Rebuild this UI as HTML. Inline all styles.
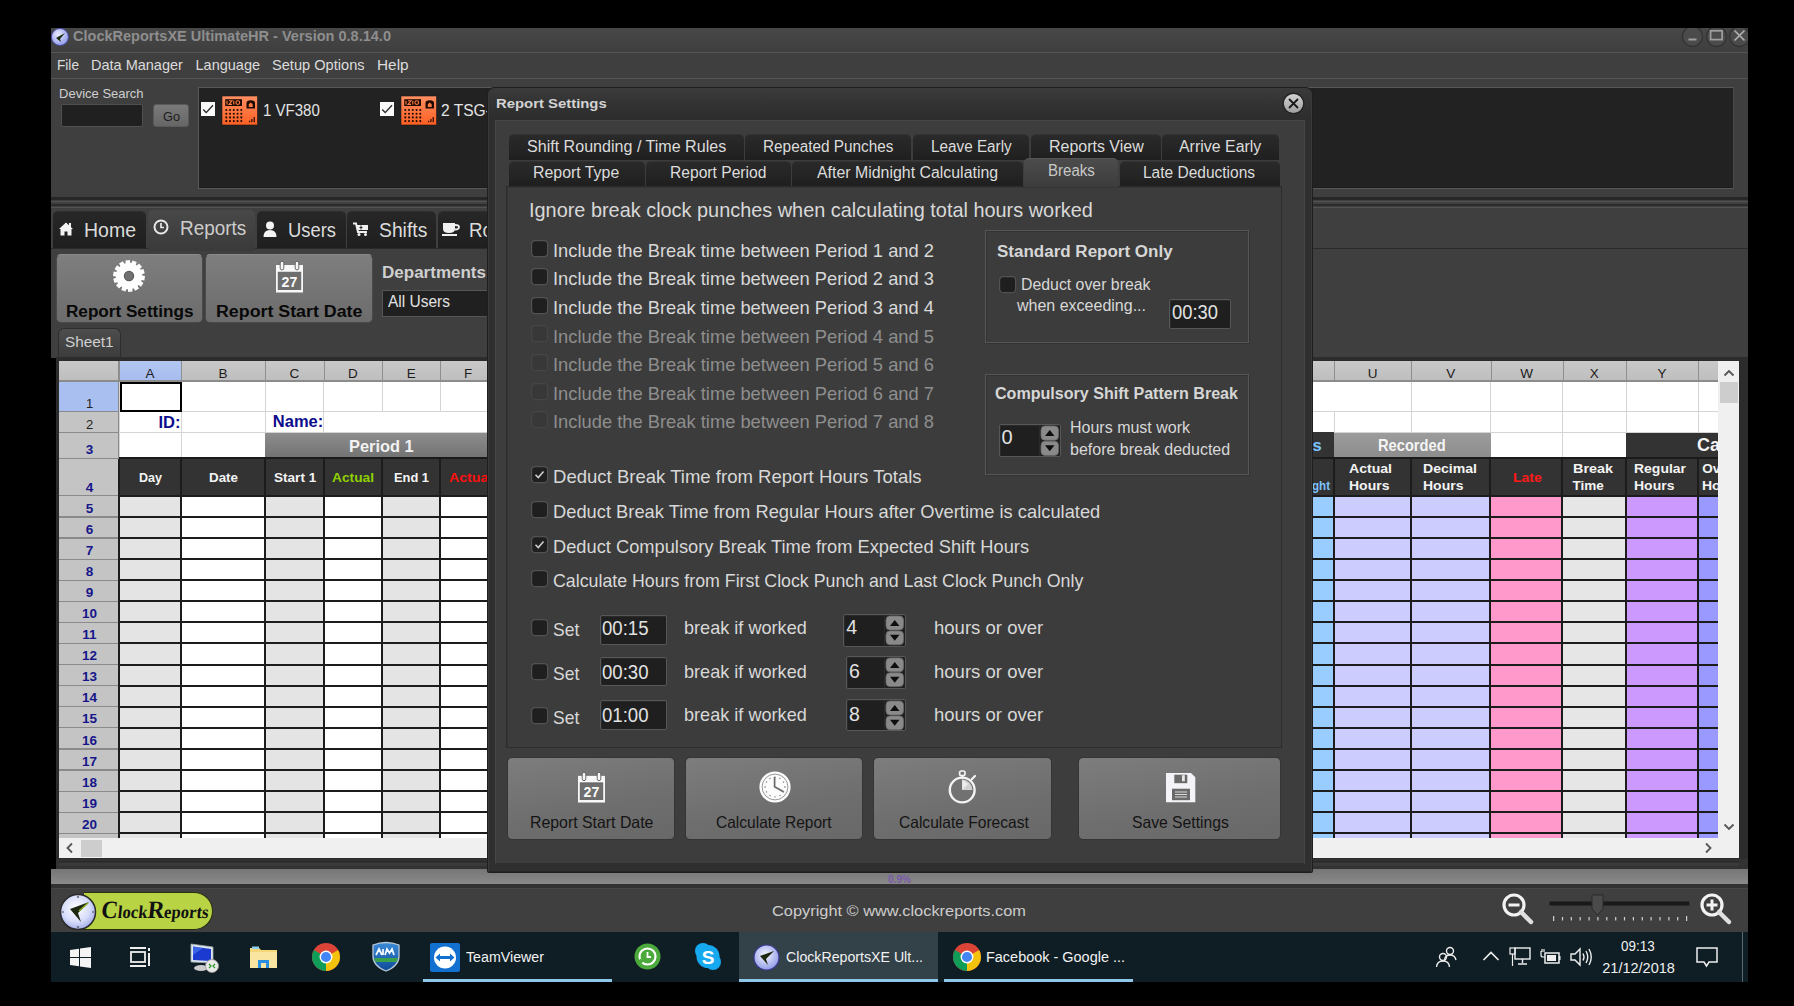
<!DOCTYPE html>
<html><head><meta charset="utf-8"><title>ClockReportsXE</title>
<style>
html,body{margin:0;padding:0;background:#000;width:1794px;height:1006px;overflow:hidden;}
body{position:relative;font-family:"Liberation Sans",sans-serif;}
.a{position:absolute;box-sizing:border-box;}
.t{white-space:nowrap;transform-origin:0 0;}
svg.a{overflow:visible;}
</style></head><body>
<div class="a" style="left:51.00px;top:28.00px;width:1697.00px;height:24.00px;background:linear-gradient(#474747,#3f3f3f);"></div>
<div class="a" style="left:51.00px;top:51.50px;width:1697.00px;height:2.00px;background:#565656;"></div>
<div class="a" style="left:51.00px;top:53.00px;width:1697.00px;height:25.00px;background:#3f3f3f;"></div>
<div class="a" style="left:51.00px;top:78.00px;width:1697.00px;height:1.00px;background:#555;"></div>
<div class="a" style="left:51.00px;top:79.00px;width:1697.00px;height:279.00px;background:#3f3f3f;"></div>
<div class="a" style="left:51.00px;top:197.00px;width:1697.00px;height:2.50px;background:#272727;"></div>
<div class="a" style="left:51.00px;top:200.50px;width:1697.00px;height:1.50px;background:#535353;"></div>
<div class="a" style="left:51.00px;top:204.00px;width:1697.00px;height:2.00px;background:#2c2c2c;"></div>
<div class="a" style="left:51.00px;top:206.50px;width:1697.00px;height:1.50px;background:#525252;"></div>
<div class="a" style="left:51.00px;top:247.50px;width:1697.00px;height:1.50px;background:#2a2a2a;"></div>
<svg class="a" style="left:51px;top:28px;" width="19" height="19" viewBox="0 0 19 19"><defs><radialGradient id="gi1" cx="40%" cy="35%" r="70%"><stop offset="0" stop-color="#e8ecff"/><stop offset="1" stop-color="#8c98e8"/></radialGradient></defs><circle cx="9" cy="9" r="8.5" fill="url(#gi1)" stroke="#4a4aa0" stroke-width="1"/><path d="M5 10 L14 5 L9 11 L10 14 Z" fill="#1a2a10"/></svg>
<div class="a t" style="left:73.00px;top:28.51px;font-size:14.4px;line-height:14.4px;color:#8e8e8e;font-weight:bold;transform:scaleX(1.0091);">ClockReportsXE UltimateHR -  Version 0.8.14.0</div>
<div class="a" style="left:1660px;top:28px;width:88px;height:30px;overflow:hidden">
<svg class="a" style="left:21.5px;top:-2px;" width="21" height="21" viewBox="0 0 21 21"><circle cx="10.5" cy="10.5" r="10" fill="#4b4b4b" stroke="#343434" stroke-width="1.3"/><rect x="6.5" y="12.5" width="8" height="2" fill="#a0a0a0"/></svg>
<svg class="a" style="left:45.5px;top:-2px;" width="21" height="21" viewBox="0 0 21 21"><circle cx="10.5" cy="10.5" r="10" fill="#4b4b4b" stroke="#343434" stroke-width="1.3"/><rect x="4.6" y="4.8" width="11.5" height="8.8" fill="none" stroke="#a0a0a0" stroke-width="1.7"/></svg>
<svg class="a" style="left:68.5px;top:-2px;" width="21" height="21" viewBox="0 0 21 21"><circle cx="10.5" cy="10.5" r="10" fill="#4b4b4b" stroke="#343434" stroke-width="1.3"/><path d="M5.5 4.5 L15.5 14.5 M15.5 4.5 L5.5 14.5" stroke="#b0b0b0" stroke-width="1.7"/></svg>
</div>
<div class="a" style="left:1748.00px;top:20.00px;width:46.00px;height:40.00px;background:#000;"></div>
<div class="a t" style="left:56.50px;top:57.73px;font-size:14.5px;line-height:14.5px;color:#dcdcdc;transform:scaleX(0.9416);">File</div>
<div class="a t" style="left:91.00px;top:57.73px;font-size:14.5px;line-height:14.5px;color:#dcdcdc;">Data Manager</div>
<div class="a t" style="left:195.50px;top:57.73px;font-size:14.5px;line-height:14.5px;color:#dcdcdc;">Language</div>
<div class="a t" style="left:272.40px;top:57.73px;font-size:14.5px;line-height:14.5px;color:#dcdcdc;transform:scaleX(1.0077);">Setup Options</div>
<div class="a t" style="left:377.40px;top:57.73px;font-size:14.5px;line-height:14.5px;color:#dcdcdc;transform:scaleX(1.0596);">Help</div>
<div class="a t" style="left:58.60px;top:87.56px;font-size:12.8px;line-height:12.8px;color:#cfcfcf;transform:scaleX(1.0166);">Device Search</div>
<div class="a" style="left:61.00px;top:104.00px;width:82.00px;height:23.00px;background:#202020;border:1px solid #505050;border-radius:2px;"></div>
<div class="a" style="left:153.00px;top:104.00px;width:36.00px;height:23.00px;background:linear-gradient(#7a7a7a,#666);border:1px solid #5a5a5a;border-radius:3px;"></div>
<div class="a t" style="left:162.50px;top:110.00px;font-size:13px;line-height:13px;color:#1c1c1c;transform:scaleX(0.9803);">Go</div>
<div class="a" style="left:198.00px;top:86.50px;width:1536.00px;height:102.00px;background:#222;border:1.5px solid #585858;border-right-color:#4a4a4a;box-shadow:inset 0 -1px 0 #1c1c1c;"></div>
<svg class="a" style="left:201px;top:102.2px;" width="14" height="14" viewBox="0 0 14 14"><rect x="0" y="0" width="14" height="14" fill="#fafafa"/><path d="M2.2 7.6 L5.2 10.6 L12 3.2" fill="none" stroke="#2a2a2a" stroke-width="1.4"/></svg>
<svg class="a" style="left:222px;top:96px;" width="36" height="29" viewBox="0 0 36 29"><defs><linearGradient id="dvg" x1="0" y1="0" x2="0" y2="1"><stop offset="0" stop-color="#ff8f62"/><stop offset="1" stop-color="#ff5f22"/></linearGradient></defs><rect x="0" y="0" width="35.5" height="29" fill="url(#dvg)" stroke="#1a1a1a" stroke-width="0.6"/><rect x="3.2" y="3.2" width="16.8" height="6.8" fill="#1e0c04"/><path d="M5 4.8 V8.4 M7 4.8 H10 L7 8.4 H10 M11.8 4.8 V8.4" stroke="#ff7a40" stroke-width="1.1" fill="none"/><circle cx="15.8" cy="6.6" r="1.9" fill="none" stroke="#ff7a40" stroke-width="1.1"/><circle cx="4.30" cy="14.00" r="1.05" fill="#1e0c04"/><circle cx="8.05" cy="14.00" r="1.05" fill="#1e0c04"/><circle cx="11.80" cy="14.00" r="1.05" fill="#1e0c04"/><circle cx="15.55" cy="14.00" r="1.05" fill="#1e0c04"/><circle cx="19.30" cy="14.00" r="1.05" fill="#1e0c04"/><circle cx="4.30" cy="17.70" r="1.05" fill="#1e0c04"/><circle cx="8.05" cy="17.70" r="1.05" fill="#1e0c04"/><circle cx="11.80" cy="17.70" r="1.05" fill="#1e0c04"/><circle cx="15.55" cy="17.70" r="1.05" fill="#1e0c04"/><circle cx="19.30" cy="17.70" r="1.05" fill="#1e0c04"/><circle cx="4.30" cy="21.40" r="1.05" fill="#1e0c04"/><circle cx="8.05" cy="21.40" r="1.05" fill="#1e0c04"/><circle cx="11.80" cy="21.40" r="1.05" fill="#1e0c04"/><circle cx="15.55" cy="21.40" r="1.05" fill="#1e0c04"/><circle cx="19.30" cy="21.40" r="1.05" fill="#1e0c04"/><circle cx="4.30" cy="25.10" r="1.05" fill="#1e0c04"/><circle cx="8.05" cy="25.10" r="1.05" fill="#1e0c04"/><circle cx="11.80" cy="25.10" r="1.05" fill="#1e0c04"/><circle cx="15.55" cy="25.10" r="1.05" fill="#1e0c04"/><circle cx="19.30" cy="25.10" r="1.05" fill="#1e0c04"/><path d="M24.5 12.5 V7 Q24.5 4.3 28.7 4.3 Q33 4.3 33 7 V12.5 Z" fill="#1e0c04"/><path d="M26.8 11 V8.3 L28.7 6.6 L30.7 8.3 V11 Z" fill="#ff7a40"/><rect x="27" y="24.8" width="1.2" height="1.4" fill="#1e0c04"/><rect x="29.3" y="23" width="1.2" height="3.2" fill="#1e0c04"/><rect x="31.6" y="21" width="1.2" height="5.2" fill="#1e0c04"/></svg>
<div class="a t" style="left:263.00px;top:102.76px;font-size:16px;line-height:16px;color:#e4e4e4;transform:scaleX(0.9391);">1 VF380</div>
<svg class="a" style="left:380px;top:102.2px;" width="14" height="14" viewBox="0 0 14 14"><rect x="0" y="0" width="14" height="14" fill="#fafafa"/><path d="M2.2 7.6 L5.2 10.6 L12 3.2" fill="none" stroke="#2a2a2a" stroke-width="1.4"/></svg>
<svg class="a" style="left:401px;top:96px;" width="36" height="29" viewBox="0 0 36 29"><defs><linearGradient id="dvg" x1="0" y1="0" x2="0" y2="1"><stop offset="0" stop-color="#ff8f62"/><stop offset="1" stop-color="#ff5f22"/></linearGradient></defs><rect x="0" y="0" width="35.5" height="29" fill="url(#dvg)" stroke="#1a1a1a" stroke-width="0.6"/><rect x="3.2" y="3.2" width="16.8" height="6.8" fill="#1e0c04"/><path d="M5 4.8 V8.4 M7 4.8 H10 L7 8.4 H10 M11.8 4.8 V8.4" stroke="#ff7a40" stroke-width="1.1" fill="none"/><circle cx="15.8" cy="6.6" r="1.9" fill="none" stroke="#ff7a40" stroke-width="1.1"/><circle cx="4.30" cy="14.00" r="1.05" fill="#1e0c04"/><circle cx="8.05" cy="14.00" r="1.05" fill="#1e0c04"/><circle cx="11.80" cy="14.00" r="1.05" fill="#1e0c04"/><circle cx="15.55" cy="14.00" r="1.05" fill="#1e0c04"/><circle cx="19.30" cy="14.00" r="1.05" fill="#1e0c04"/><circle cx="4.30" cy="17.70" r="1.05" fill="#1e0c04"/><circle cx="8.05" cy="17.70" r="1.05" fill="#1e0c04"/><circle cx="11.80" cy="17.70" r="1.05" fill="#1e0c04"/><circle cx="15.55" cy="17.70" r="1.05" fill="#1e0c04"/><circle cx="19.30" cy="17.70" r="1.05" fill="#1e0c04"/><circle cx="4.30" cy="21.40" r="1.05" fill="#1e0c04"/><circle cx="8.05" cy="21.40" r="1.05" fill="#1e0c04"/><circle cx="11.80" cy="21.40" r="1.05" fill="#1e0c04"/><circle cx="15.55" cy="21.40" r="1.05" fill="#1e0c04"/><circle cx="19.30" cy="21.40" r="1.05" fill="#1e0c04"/><circle cx="4.30" cy="25.10" r="1.05" fill="#1e0c04"/><circle cx="8.05" cy="25.10" r="1.05" fill="#1e0c04"/><circle cx="11.80" cy="25.10" r="1.05" fill="#1e0c04"/><circle cx="15.55" cy="25.10" r="1.05" fill="#1e0c04"/><circle cx="19.30" cy="25.10" r="1.05" fill="#1e0c04"/><path d="M24.5 12.5 V7 Q24.5 4.3 28.7 4.3 Q33 4.3 33 7 V12.5 Z" fill="#1e0c04"/><path d="M26.8 11 V8.3 L28.7 6.6 L30.7 8.3 V11 Z" fill="#ff7a40"/><rect x="27" y="24.8" width="1.2" height="1.4" fill="#1e0c04"/><rect x="29.3" y="23" width="1.2" height="3.2" fill="#1e0c04"/><rect x="31.6" y="21" width="1.2" height="5.2" fill="#1e0c04"/></svg>
<div class="a t" style="left:441.00px;top:102.76px;font-size:16px;line-height:16px;color:#e4e4e4;transform:scaleX(0.9711);">2 TSG-400</div>
<div class="a" style="left:52.60px;top:211.00px;width:93.40px;height:37.00px;background:linear-gradient(#272727,#1f1f1f);border-radius:5px 5px 0 0;border-top:1px solid #2e2e2e;"></div>
<div class="a" style="left:148.00px;top:209.50px;width:107.00px;height:41.00px;background:linear-gradient(#484848,#3a3a3a);border-radius:5px 5px 0 0;"></div>
<div class="a" style="left:257.00px;top:211.00px;width:89.00px;height:37.00px;background:linear-gradient(#272727,#1f1f1f);border-radius:5px 5px 0 0;border-top:1px solid #2e2e2e;"></div>
<div class="a" style="left:347.00px;top:211.00px;width:89.00px;height:37.00px;background:linear-gradient(#272727,#1f1f1f);border-radius:5px 5px 0 0;border-top:1px solid #2e2e2e;"></div>
<div class="a" style="left:438.00px;top:211.00px;width:62.00px;height:37.00px;background:linear-gradient(#272727,#1f1f1f);border-radius:5px 5px 0 0;border-top:1px solid #2e2e2e;"></div>
<div class="a t" style="left:84.30px;top:219.87px;font-size:20px;line-height:20px;color:#dcdcdc;transform:scaleX(0.9747);">Home</div>
<div class="a t" style="left:179.50px;top:218.07px;font-size:20px;line-height:20px;color:#cdcdcd;transform:scaleX(0.9453);">Reports</div>
<div class="a t" style="left:288.40px;top:219.87px;font-size:20px;line-height:20px;color:#dcdcdc;transform:scaleX(0.9191);">Users</div>
<div class="a t" style="left:378.70px;top:219.87px;font-size:20px;line-height:20px;color:#dcdcdc;transform:scaleX(0.9656);">Shifts</div>
<div class="a t" style="left:469.40px;top:219.87px;font-size:20px;line-height:20px;color:#dcdcdc;transform:scaleX(0.9387);">Ro</div>
<svg class="a" style="left:58px;top:221px;" width="16" height="15" viewBox="0 0 16 15"><path d="M1 8 L8 1.5 L15 8 L13.5 8 L13.5 14.5 L9.5 14.5 L9.5 10.5 L6.5 10.5 L6.5 14.5 L2.5 14.5 L2.5 8 Z" fill="#f4f4f4"/><rect x="11" y="2" width="2" height="4" fill="#f4f4f4"/></svg>
<svg class="a" style="left:153px;top:219px;" width="16" height="16" viewBox="0 0 16 16"><circle cx="8" cy="8" r="6.5" fill="none" stroke="#e8e8e8" stroke-width="2"/><path d="M8 4 V8.5 H11" fill="none" stroke="#e8e8e8" stroke-width="1.7"/></svg>
<svg class="a" style="left:263px;top:221px;" width="14" height="16" viewBox="0 0 14 16"><circle cx="7" cy="4.5" r="4" fill="#f4f4f4"/><path d="M0.5 16 Q0.5 9 7 9 Q13.5 9 13.5 16 Z" fill="#f4f4f4"/></svg>
<svg class="a" style="left:353px;top:222px;" width="16" height="14" viewBox="0 0 16 14"><path d="M0 1.5 H3 L5 10 H14" fill="none" stroke="#f0f0f0" stroke-width="2"/><rect x="4" y="3" width="11" height="5" fill="#f0f0f0"/><path d="M8 3.5 v4 M6.5 5.5 h3" stroke="#222" stroke-width="1"/><circle cx="6" cy="12.5" r="1.5" fill="#f0f0f0"/><circle cx="12.5" cy="12.5" r="1.5" fill="#f0f0f0"/></svg>
<svg class="a" style="left:442px;top:221px;" width="18" height="15" viewBox="0 0 18 15"><path d="M1 2 H13 V8 Q13 12 7 12 Q1 12 1 8 Z" fill="#f0f0f0"/><path d="M13 4 Q17 4 17 6 Q17 8.5 13 8.5" fill="none" stroke="#f0f0f0" stroke-width="1.8"/><rect x="0" y="13" width="15" height="2" fill="#f0f0f0"/></svg>
<div class="a" style="left:56.00px;top:254.00px;width:146.50px;height:68.50px;background:linear-gradient(#7e7e7e,#6c6c6c);border-radius:5px;border:1px solid #4a4a4a;border-top-color:#8a8a8a;"></div>
<div class="a" style="left:205.00px;top:254.00px;width:167.50px;height:68.50px;background:linear-gradient(#7e7e7e,#6c6c6c);border-radius:5px;border:1px solid #4a4a4a;border-top-color:#8a8a8a;"></div>
<div class="a t" style="left:66.00px;top:304.46px;font-size:16px;line-height:16px;color:#080808;font-weight:bold;transform:scaleX(1.0704);">Report Settings</div>
<div class="a t" style="left:216.30px;top:304.46px;font-size:16px;line-height:16px;color:#080808;font-weight:bold;transform:scaleX(1.1126);">Report Start Date</div>
<svg class="a" style="left:112.9px;top:259.8px;" width="32" height="32" viewBox="0 0 32 32"><polygon points="32.00,16.00 31.38,20.39 28.55,20.08 28.09,21.30 30.42,22.94 27.95,26.63 25.54,25.12 24.60,26.02 25.98,28.51 22.16,30.77 20.64,28.36 19.40,28.76 19.56,31.60 15.14,31.98 14.82,29.15 13.53,28.97 12.44,31.60 8.29,30.02 9.23,27.33 8.15,26.61 6.02,28.51 2.97,25.29 4.98,23.27 4.32,22.15 1.58,22.94 0.23,18.72 2.92,17.77 2.81,16.47 0.00,16.00 0.62,11.61 3.45,11.92 3.91,10.70 1.58,9.06 4.05,5.37 6.46,6.88 7.40,5.98 6.02,3.49 9.84,1.23 11.36,3.64 12.60,3.24 12.44,0.40 16.86,0.02 17.18,2.85 18.47,3.03 19.56,0.40 23.71,1.98 22.77,4.67 23.85,5.39 25.98,3.49 29.03,6.71 27.02,8.73 27.68,9.85 30.42,9.06 31.77,13.28 29.08,14.23 29.19,15.53" fill="#fdfdfd"/><circle cx="16" cy="16" r="4.6" fill="#707070" stroke="#5a5a5a" stroke-width="1.2"/></svg>
<svg class="a" style="left:275px;top:261px;" width="29" height="32" viewBox="0 0 29 32"><g transform="scale(1.000,1.000)"><rect x="1" y="4" width="27" height="27.5" fill="#f8f8f8"/><rect x="3.2" y="11.2" width="22.6" height="17.3" fill="#6e6e6e" stroke="#5e5e5e" stroke-width="0.8"/><rect x="5.2" y="0.3" width="3.6" height="8.6" rx="1.8" fill="#f8f8f8" stroke="#5a5a5a" stroke-width="0.9"/><rect x="20.2" y="0.3" width="3.6" height="8.6" rx="1.8" fill="#f8f8f8" stroke="#5a5a5a" stroke-width="0.9"/><text x="14.5" y="26.2" font-size="14.2" font-family="Liberation Sans" font-weight="bold" text-anchor="middle" fill="#fafafa">27</text></g></svg>
<div class="a t" style="left:382.40px;top:264.03px;font-size:16.5px;line-height:16.5px;color:#cfcfcf;font-weight:bold;transform:scaleX(1.0311);">Departments</div>
<div class="a" style="left:382.40px;top:290.00px;width:200.00px;height:27.00px;background:#202020;border:1px solid #555;"></div>
<div class="a t" style="left:388.00px;top:294.46px;font-size:16px;line-height:16px;color:#e2e2e2;transform:scaleX(0.9686);">All Users</div>
<div class="a" style="left:58.30px;top:328.40px;width:62.50px;height:30.00px;background:linear-gradient(#4d4d4d,#3c3c3c);border:1px solid #2e2e2e;border-bottom:none;border-radius:6px 6px 0 0;"></div>
<div class="a t" style="left:64.70px;top:333.88px;font-size:15.5px;line-height:15.5px;color:#cfcfcf;transform:scaleX(0.9893);">Sheet1</div>
<div class="a" style="left:56.00px;top:356.50px;width:1692.00px;height:508.00px;background:#2c2c2c;"></div>
<div class="a" style="left:59.00px;top:361.00px;width:1680.00px;height:477.00px;background:#fff;"></div>
<div class="a" style="left:0;top:0;width:1718px;height:838px;overflow:hidden">
<div class="a" style="left:119.00px;top:361.00px;width:1640.00px;height:20.50px;background:linear-gradient(#c9c9c9,#bdbdbd);"></div>
<div class="a" style="left:59.00px;top:361.00px;width:60.00px;height:20.50px;background:linear-gradient(#c9c9c9,#bdbdbd);"></div>
<div class="a" style="left:119.00px;top:361.00px;width:62.00px;height:20.50px;background:linear-gradient(#b3c6f2,#a6bcef);"></div>
<div class="a" style="left:119.00px;top:361.00px;width:1.00px;height:20.50px;background:#8f8f8f;"></div>
<div class="a t" style="left:145.50px;top:366.57px;font-size:13.5px;line-height:13.5px;color:#1c1c1c;">A</div>
<div class="a" style="left:181.00px;top:361.00px;width:1.00px;height:20.50px;background:#8f8f8f;"></div>
<div class="a t" style="left:218.50px;top:366.57px;font-size:13.5px;line-height:13.5px;color:#1c1c1c;">B</div>
<div class="a" style="left:265.00px;top:361.00px;width:1.00px;height:20.50px;background:#8f8f8f;"></div>
<div class="a t" style="left:289.43px;top:366.57px;font-size:13.5px;line-height:13.5px;color:#1c1c1c;">C</div>
<div class="a" style="left:323.60px;top:361.00px;width:1.00px;height:20.50px;background:#8f8f8f;"></div>
<div class="a t" style="left:347.93px;top:366.57px;font-size:13.5px;line-height:13.5px;color:#1c1c1c;">D</div>
<div class="a" style="left:382.00px;top:361.00px;width:1.00px;height:20.50px;background:#8f8f8f;"></div>
<div class="a t" style="left:406.70px;top:366.57px;font-size:13.5px;line-height:13.5px;color:#1c1c1c;">E</div>
<div class="a" style="left:440.40px;top:361.00px;width:1.00px;height:20.50px;background:#8f8f8f;"></div>
<div class="a t" style="left:463.88px;top:366.57px;font-size:13.5px;line-height:13.5px;color:#1c1c1c;">F</div>
<div class="a" style="left:510.00px;top:361.00px;width:1.00px;height:20.50px;background:#8f8f8f;"></div>
<div class="a" style="left:1260.00px;top:361.00px;width:1.00px;height:20.50px;background:#8f8f8f;"></div>
<div class="a" style="left:1334.00px;top:361.00px;width:1.00px;height:20.50px;background:#8f8f8f;"></div>
<div class="a t" style="left:1367.63px;top:366.57px;font-size:13.5px;line-height:13.5px;color:#1c1c1c;">U</div>
<div class="a" style="left:1411.00px;top:361.00px;width:1.00px;height:20.50px;background:#8f8f8f;"></div>
<div class="a t" style="left:1446.25px;top:366.57px;font-size:13.5px;line-height:13.5px;color:#1c1c1c;">V</div>
<div class="a" style="left:1490.50px;top:361.00px;width:1.00px;height:20.50px;background:#8f8f8f;"></div>
<div class="a t" style="left:1520.13px;top:366.57px;font-size:13.5px;line-height:13.5px;color:#1c1c1c;">W</div>
<div class="a" style="left:1562.50px;top:361.00px;width:1.00px;height:20.50px;background:#8f8f8f;"></div>
<div class="a t" style="left:1589.75px;top:366.57px;font-size:13.5px;line-height:13.5px;color:#1c1c1c;">X</div>
<div class="a" style="left:1626.00px;top:361.00px;width:1.00px;height:20.50px;background:#8f8f8f;"></div>
<div class="a t" style="left:1657.50px;top:366.57px;font-size:13.5px;line-height:13.5px;color:#1c1c1c;">Y</div>
<div class="a" style="left:1698.00px;top:361.00px;width:1.00px;height:20.50px;background:#8f8f8f;"></div>
<div class="a" style="left:59.00px;top:380.00px;width:1680.00px;height:1.50px;background:#8c8c8c;"></div>
<div class="a" style="left:59.00px;top:381.50px;width:60.00px;height:460.00px;background:#c4c4c4;"></div>
<div class="a" style="left:59.00px;top:381.50px;width:60.00px;height:29.50px;background:#a9bff0;"></div>
<div class="a" style="left:59.00px;top:381.00px;width:60.00px;height:1.20px;background:#8a8a8a;"></div>
<div class="a" style="left:59.00px;top:410.50px;width:60.00px;height:1.20px;background:#8a8a8a;"></div>
<div class="a" style="left:59.00px;top:431.80px;width:60.00px;height:1.20px;background:#8a8a8a;"></div>
<div class="a" style="left:59.00px;top:458.00px;width:60.00px;height:1.20px;background:#8a8a8a;"></div>
<div class="a" style="left:59.00px;top:495.30px;width:60.00px;height:1.20px;background:#8a8a8a;"></div>
<div class="a" style="left:59.00px;top:516.39px;width:60.00px;height:1.20px;background:#8a8a8a;"></div>
<div class="a" style="left:59.00px;top:537.48px;width:60.00px;height:1.20px;background:#8a8a8a;"></div>
<div class="a" style="left:59.00px;top:558.57px;width:60.00px;height:1.20px;background:#8a8a8a;"></div>
<div class="a" style="left:59.00px;top:579.66px;width:60.00px;height:1.20px;background:#8a8a8a;"></div>
<div class="a" style="left:59.00px;top:600.75px;width:60.00px;height:1.20px;background:#8a8a8a;"></div>
<div class="a" style="left:59.00px;top:621.84px;width:60.00px;height:1.20px;background:#8a8a8a;"></div>
<div class="a" style="left:59.00px;top:642.93px;width:60.00px;height:1.20px;background:#8a8a8a;"></div>
<div class="a" style="left:59.00px;top:664.02px;width:60.00px;height:1.20px;background:#8a8a8a;"></div>
<div class="a" style="left:59.00px;top:685.11px;width:60.00px;height:1.20px;background:#8a8a8a;"></div>
<div class="a" style="left:59.00px;top:706.20px;width:60.00px;height:1.20px;background:#8a8a8a;"></div>
<div class="a" style="left:59.00px;top:727.29px;width:60.00px;height:1.20px;background:#8a8a8a;"></div>
<div class="a" style="left:59.00px;top:748.38px;width:60.00px;height:1.20px;background:#8a8a8a;"></div>
<div class="a" style="left:59.00px;top:769.47px;width:60.00px;height:1.20px;background:#8a8a8a;"></div>
<div class="a" style="left:59.00px;top:790.56px;width:60.00px;height:1.20px;background:#8a8a8a;"></div>
<div class="a" style="left:59.00px;top:811.65px;width:60.00px;height:1.20px;background:#8a8a8a;"></div>
<div class="a" style="left:59.00px;top:832.74px;width:60.00px;height:1.20px;background:#8a8a8a;"></div>
<div class="a" style="left:118.00px;top:361.00px;width:1.00px;height:480.00px;background:#8a8a8a;"></div>
<div class="a" style="left:119.00px;top:381.50px;width:1640.00px;height:77.00px;background:#fff;"></div>
<div class="a" style="left:119.00px;top:410.50px;width:1640.00px;height:1.20px;background:#d4d4d4;"></div>
<div class="a" style="left:119.00px;top:431.80px;width:1640.00px;height:1.20px;background:#d4d4d4;"></div>
<div class="a" style="left:119.00px;top:458.00px;width:1640.00px;height:1.20px;background:#d4d4d4;"></div>
<div class="a" style="left:118.50px;top:381.50px;width:1.20px;height:77.00px;background:#d4d4d4;"></div>
<div class="a" style="left:180.50px;top:381.50px;width:1.20px;height:77.00px;background:#d4d4d4;"></div>
<div class="a" style="left:264.50px;top:381.50px;width:1.20px;height:77.00px;background:#d4d4d4;"></div>
<div class="a" style="left:323.10px;top:381.50px;width:1.20px;height:77.00px;background:#d4d4d4;"></div>
<div class="a" style="left:381.50px;top:381.50px;width:1.20px;height:29.50px;background:#d4d4d4;"></div>
<div class="a" style="left:439.90px;top:381.50px;width:1.20px;height:29.50px;background:#d4d4d4;"></div>
<div class="a" style="left:509.50px;top:381.50px;width:1.20px;height:29.50px;background:#d4d4d4;"></div>
<div class="a" style="left:1259.50px;top:381.50px;width:1.20px;height:77.00px;background:#d4d4d4;"></div>
<div class="a" style="left:1333.50px;top:411.00px;width:1.20px;height:47.50px;background:#d4d4d4;"></div>
<div class="a" style="left:1410.50px;top:381.50px;width:1.20px;height:77.00px;background:#d4d4d4;"></div>
<div class="a" style="left:1490.00px;top:381.50px;width:1.20px;height:77.00px;background:#d4d4d4;"></div>
<div class="a" style="left:1562.00px;top:381.50px;width:1.20px;height:77.00px;background:#d4d4d4;"></div>
<div class="a" style="left:1625.50px;top:381.50px;width:1.20px;height:77.00px;background:#d4d4d4;"></div>
<div class="a" style="left:1697.50px;top:381.50px;width:1.20px;height:77.00px;background:#d4d4d4;"></div>
<div class="a" style="left:265.00px;top:432.80px;width:300.00px;height:25.70px;background:linear-gradient(#8d8d8d,#727272);"></div>
<div class="a" style="left:1312.00px;top:432.30px;width:22.00px;height:26.20px;background:#333;"></div>
<div class="a" style="left:1334.00px;top:432.80px;width:156.50px;height:25.70px;background:linear-gradient(#9c9c9c,#8c8c8c);"></div>
<div class="a" style="left:1626.00px;top:432.80px;width:120.00px;height:25.70px;background:#333;"></div>
<div class="a" style="left:119.00px;top:458.50px;width:1640.00px;height:37.30px;background:#333;"></div>
<div class="a" style="left:119.00px;top:495.80px;width:62.00px;height:345.00px;background:#e4e4e4;"></div>
<div class="a" style="left:181.00px;top:495.80px;width:84.00px;height:345.00px;background:#fff;"></div>
<div class="a" style="left:265.00px;top:495.80px;width:58.60px;height:345.00px;background:#e4e4e4;"></div>
<div class="a" style="left:323.60px;top:495.80px;width:58.40px;height:345.00px;background:#fff;"></div>
<div class="a" style="left:382.00px;top:495.80px;width:58.40px;height:345.00px;background:#e4e4e4;"></div>
<div class="a" style="left:440.40px;top:495.80px;width:69.60px;height:345.00px;background:#fff;"></div>
<div class="a" style="left:510.00px;top:495.80px;width:60.00px;height:345.00px;background:#e4e4e4;"></div>
<div class="a" style="left:1260.00px;top:495.80px;width:74.00px;height:345.00px;background:#99ccff;"></div>
<div class="a" style="left:1334.00px;top:495.80px;width:77.00px;height:345.00px;background:#ccccff;"></div>
<div class="a" style="left:1411.00px;top:495.80px;width:79.50px;height:345.00px;background:#ccccff;"></div>
<div class="a" style="left:1490.50px;top:495.80px;width:72.00px;height:345.00px;background:#ff99cc;"></div>
<div class="a" style="left:1562.50px;top:495.80px;width:63.50px;height:345.00px;background:#e6e6e6;"></div>
<div class="a" style="left:1626.00px;top:495.80px;width:72.00px;height:345.00px;background:#cc99ff;"></div>
<div class="a" style="left:1698.00px;top:495.80px;width:72.00px;height:345.00px;background:#9999ff;"></div>
<div class="a" style="left:118.00px;top:458.50px;width:1.60px;height:380.00px;background:#1c1c1c;"></div>
<div class="a" style="left:180.00px;top:458.50px;width:1.60px;height:380.00px;background:#1c1c1c;"></div>
<div class="a" style="left:264.00px;top:458.50px;width:1.60px;height:380.00px;background:#1c1c1c;"></div>
<div class="a" style="left:323.00px;top:458.50px;width:1.60px;height:380.00px;background:#1c1c1c;"></div>
<div class="a" style="left:381.00px;top:458.50px;width:1.60px;height:380.00px;background:#1c1c1c;"></div>
<div class="a" style="left:439.00px;top:458.50px;width:1.60px;height:380.00px;background:#1c1c1c;"></div>
<div class="a" style="left:509.00px;top:458.50px;width:1.60px;height:380.00px;background:#1c1c1c;"></div>
<div class="a" style="left:1259.00px;top:458.50px;width:1.60px;height:380.00px;background:#1c1c1c;"></div>
<div class="a" style="left:1333.00px;top:458.50px;width:1.60px;height:380.00px;background:#1c1c1c;"></div>
<div class="a" style="left:1410.00px;top:458.50px;width:1.60px;height:380.00px;background:#1c1c1c;"></div>
<div class="a" style="left:1489.00px;top:458.50px;width:1.60px;height:380.00px;background:#1c1c1c;"></div>
<div class="a" style="left:1561.00px;top:458.50px;width:1.60px;height:380.00px;background:#1c1c1c;"></div>
<div class="a" style="left:1625.00px;top:458.50px;width:1.60px;height:380.00px;background:#1c1c1c;"></div>
<div class="a" style="left:1697.00px;top:458.50px;width:1.60px;height:380.00px;background:#1c1c1c;"></div>
<div class="a" style="left:119.00px;top:457.00px;width:1640.00px;height:1.60px;background:#1c1c1c;"></div>
<div class="a" style="left:119.00px;top:495.00px;width:1640.00px;height:1.60px;background:#1c1c1c;"></div>
<div class="a" style="left:119.00px;top:516.00px;width:1640.00px;height:1.60px;background:#1c1c1c;"></div>
<div class="a" style="left:119.00px;top:537.00px;width:1640.00px;height:1.60px;background:#1c1c1c;"></div>
<div class="a" style="left:119.00px;top:558.00px;width:1640.00px;height:1.60px;background:#1c1c1c;"></div>
<div class="a" style="left:119.00px;top:579.00px;width:1640.00px;height:1.60px;background:#1c1c1c;"></div>
<div class="a" style="left:119.00px;top:600.00px;width:1640.00px;height:1.60px;background:#1c1c1c;"></div>
<div class="a" style="left:119.00px;top:621.00px;width:1640.00px;height:1.60px;background:#1c1c1c;"></div>
<div class="a" style="left:119.00px;top:642.00px;width:1640.00px;height:1.60px;background:#1c1c1c;"></div>
<div class="a" style="left:119.00px;top:664.00px;width:1640.00px;height:1.60px;background:#1c1c1c;"></div>
<div class="a" style="left:119.00px;top:685.00px;width:1640.00px;height:1.60px;background:#1c1c1c;"></div>
<div class="a" style="left:119.00px;top:706.00px;width:1640.00px;height:1.60px;background:#1c1c1c;"></div>
<div class="a" style="left:119.00px;top:727.00px;width:1640.00px;height:1.60px;background:#1c1c1c;"></div>
<div class="a" style="left:119.00px;top:748.00px;width:1640.00px;height:1.60px;background:#1c1c1c;"></div>
<div class="a" style="left:119.00px;top:769.00px;width:1640.00px;height:1.60px;background:#1c1c1c;"></div>
<div class="a" style="left:119.00px;top:790.00px;width:1640.00px;height:1.60px;background:#1c1c1c;"></div>
<div class="a" style="left:119.00px;top:811.00px;width:1640.00px;height:1.60px;background:#1c1c1c;"></div>
<div class="a" style="left:119.00px;top:832.00px;width:1640.00px;height:1.60px;background:#1c1c1c;"></div>
<div class="a" style="left:119.00px;top:457.00px;width:1640.00px;height:2.00px;background:#1a1a1a;"></div>
<div class="a" style="left:119.50px;top:382.00px;width:62.00px;height:30.00px;border:2.6px solid #000;"></div>
<div class="a t" style="left:85.89px;top:397.20px;font-size:13px;line-height:13px;color:#222;">1</div>
<div class="a t" style="left:85.89px;top:418.40px;font-size:13px;line-height:13px;color:#222;">2</div>
<div class="a t" style="left:85.75px;top:443.27px;font-size:13.5px;line-height:13.5px;color:#16168a;font-weight:bold;">3</div>
<div class="a t" style="left:85.75px;top:481.07px;font-size:13.5px;line-height:13.5px;color:#16168a;font-weight:bold;">4</div>
<div class="a t" style="left:85.75px;top:501.57px;font-size:13.5px;line-height:13.5px;color:#16168a;font-weight:bold;">5</div>
<div class="a t" style="left:85.75px;top:522.66px;font-size:13.5px;line-height:13.5px;color:#16168a;font-weight:bold;">6</div>
<div class="a t" style="left:85.75px;top:543.75px;font-size:13.5px;line-height:13.5px;color:#16168a;font-weight:bold;">7</div>
<div class="a t" style="left:85.75px;top:564.84px;font-size:13.5px;line-height:13.5px;color:#16168a;font-weight:bold;">8</div>
<div class="a t" style="left:85.75px;top:585.93px;font-size:13.5px;line-height:13.5px;color:#16168a;font-weight:bold;">9</div>
<div class="a t" style="left:81.99px;top:607.02px;font-size:13.5px;line-height:13.5px;color:#16168a;font-weight:bold;">10</div>
<div class="a t" style="left:82.36px;top:628.11px;font-size:13.5px;line-height:13.5px;color:#16168a;font-weight:bold;">11</div>
<div class="a t" style="left:81.99px;top:649.20px;font-size:13.5px;line-height:13.5px;color:#16168a;font-weight:bold;">12</div>
<div class="a t" style="left:81.99px;top:670.29px;font-size:13.5px;line-height:13.5px;color:#16168a;font-weight:bold;">13</div>
<div class="a t" style="left:81.99px;top:691.38px;font-size:13.5px;line-height:13.5px;color:#16168a;font-weight:bold;">14</div>
<div class="a t" style="left:81.99px;top:712.47px;font-size:13.5px;line-height:13.5px;color:#16168a;font-weight:bold;">15</div>
<div class="a t" style="left:81.99px;top:733.56px;font-size:13.5px;line-height:13.5px;color:#16168a;font-weight:bold;">16</div>
<div class="a t" style="left:81.99px;top:754.65px;font-size:13.5px;line-height:13.5px;color:#16168a;font-weight:bold;">17</div>
<div class="a t" style="left:81.99px;top:775.74px;font-size:13.5px;line-height:13.5px;color:#16168a;font-weight:bold;">18</div>
<div class="a t" style="left:81.99px;top:796.83px;font-size:13.5px;line-height:13.5px;color:#16168a;font-weight:bold;">19</div>
<div class="a t" style="left:81.99px;top:817.92px;font-size:13.5px;line-height:13.5px;color:#16168a;font-weight:bold;">20</div>
<div class="a t" style="left:81.99px;top:839.01px;font-size:13.5px;line-height:13.5px;color:#16168a;font-weight:bold;">21</div>
<div class="a t" style="left:158.51px;top:413.73px;font-size:16.5px;line-height:16.5px;color:#0c0c8c;font-weight:bold;">ID:</div>
<div class="a t" style="left:272.80px;top:413.23px;font-size:16.5px;line-height:16.5px;color:#0c0c8c;font-weight:bold;">Name:</div>
<div class="a t" style="left:349.40px;top:437.73px;font-size:16.5px;line-height:16.5px;color:#f2f2f2;font-weight:bold;transform:scaleX(0.9938);">Period 1</div>
<div class="a t" style="left:138.50px;top:470.57px;font-size:13.5px;line-height:13.5px;color:#f4f4f4;font-weight:bold;transform:scaleX(0.9287);">Day</div>
<div class="a t" style="left:209.00px;top:470.57px;font-size:13.5px;line-height:13.5px;color:#f4f4f4;font-weight:bold;transform:scaleX(0.9911);">Date</div>
<div class="a t" style="left:274.40px;top:470.57px;font-size:13.5px;line-height:13.5px;color:#f4f4f4;font-weight:bold;transform:scaleX(1.0044);">Start 1</div>
<div class="a t" style="left:332.00px;top:470.57px;font-size:13.5px;line-height:13.5px;color:#8fd000;font-weight:bold;transform:scaleX(1.0180);">Actual</div>
<div class="a t" style="left:394.00px;top:470.57px;font-size:13.5px;line-height:13.5px;color:#f4f4f4;font-weight:bold;transform:scaleX(0.9522);">End 1</div>
<div class="a t" style="left:449.00px;top:470.57px;font-size:13.5px;line-height:13.5px;color:#ff1010;font-weight:bold;transform:scaleX(1.0473);">Actual 1</div>
<div class="a t" style="left:1312.50px;top:437.03px;font-size:16.5px;line-height:16.5px;color:#7cc4ff;font-weight:bold;">s</div>
<div class="a t" style="left:1312.00px;top:478.77px;font-size:13.5px;line-height:13.5px;color:#7cc4ff;font-weight:bold;transform:scaleX(0.8576);">ght</div>
<div class="a t" style="left:1378.00px;top:437.43px;font-size:16.5px;line-height:16.5px;color:#f4f4f4;font-weight:bold;transform:scaleX(0.8883);">Recorded</div>
<div class="a t" style="left:1349.00px;top:461.87px;font-size:13.5px;line-height:13.5px;color:#f4f4f4;font-weight:bold;transform:scaleX(1.0422);">Actual</div>
<div class="a t" style="left:1349.00px;top:479.07px;font-size:13.5px;line-height:13.5px;color:#f4f4f4;font-weight:bold;transform:scaleX(1.0384);">Hours</div>
<div class="a t" style="left:1422.50px;top:461.87px;font-size:13.5px;line-height:13.5px;color:#f4f4f4;font-weight:bold;transform:scaleX(1.0429);">Decimal</div>
<div class="a t" style="left:1422.50px;top:479.07px;font-size:13.5px;line-height:13.5px;color:#f4f4f4;font-weight:bold;transform:scaleX(1.0384);">Hours</div>
<div class="a t" style="left:1572.60px;top:461.87px;font-size:13.5px;line-height:13.5px;color:#f4f4f4;font-weight:bold;transform:scaleX(1.0659);">Break</div>
<div class="a t" style="left:1572.60px;top:479.07px;font-size:13.5px;line-height:13.5px;color:#f4f4f4;font-weight:bold;">Time</div>
<div class="a t" style="left:1633.80px;top:461.87px;font-size:13.5px;line-height:13.5px;color:#f4f4f4;font-weight:bold;transform:scaleX(1.0346);">Regular</div>
<div class="a t" style="left:1633.80px;top:479.07px;font-size:13.5px;line-height:13.5px;color:#f4f4f4;font-weight:bold;transform:scaleX(1.0384);">Hours</div>
<div class="a t" style="left:1702.20px;top:461.87px;font-size:13.5px;line-height:13.5px;color:#f4f4f4;font-weight:bold;">Overtime</div>
<div class="a t" style="left:1702.20px;top:479.07px;font-size:13.5px;line-height:13.5px;color:#f4f4f4;font-weight:bold;transform:scaleX(1.0384);">Hours</div>
<div class="a t" style="left:1513.00px;top:471.17px;font-size:13.5px;line-height:13.5px;color:#ff1a1a;font-weight:bold;transform:scaleX(1.0339);">Late</div>
<div class="a t" style="left:1697.00px;top:435.76px;font-size:18px;line-height:18px;color:#f4f4f4;font-weight:bold;">Calculated</div>
</div>
<div class="a" style="left:59.00px;top:838.00px;width:1659.00px;height:20.00px;background:#f0f0f0;"></div>
<div class="a" style="left:81.00px;top:840.00px;width:21.00px;height:17.00px;background:#cdcdcd;"></div>
<svg class="a" style="left:65px;top:842px;" width="10" height="12" viewBox="0 0 10 12"><path d="M7 1.5 L2.5 6 L7 10.5" fill="none" stroke="#555" stroke-width="1.8"/></svg>
<svg class="a" style="left:1703px;top:842px;" width="10" height="12" viewBox="0 0 10 12"><path d="M3 1.5 L7.5 6 L3 10.5" fill="none" stroke="#555" stroke-width="1.8"/></svg>
<div class="a" style="left:1718.00px;top:361.00px;width:21.00px;height:497.00px;background:#f0f0f0;"></div>
<div class="a" style="left:1720.00px;top:382.00px;width:18.00px;height:21.00px;background:#cdcdcd;"></div>
<svg class="a" style="left:1723px;top:368px;" width="12" height="10" viewBox="0 0 12 10"><path d="M1.5 7.5 L6 3 L10.5 7.5" fill="none" stroke="#555" stroke-width="1.8"/></svg>
<svg class="a" style="left:1723px;top:822px;" width="12" height="10" viewBox="0 0 12 10"><path d="M1.5 2.5 L6 7 L10.5 2.5" fill="none" stroke="#555" stroke-width="1.8"/></svg>
<div class="a" style="left:56.00px;top:858.50px;width:1692.00px;height:10.00px;background:#323232;"></div>
<div class="a" style="left:59.00px;top:861.00px;width:1680.00px;height:1.00px;background:#292929;"></div>
<div class="a" style="left:59.00px;top:862.50px;width:1680.00px;height:3.00px;background:#3a3a3a;"></div>
<div class="a" style="left:51.00px;top:868.50px;width:1697.00px;height:15.50px;background:linear-gradient(#767676,#8a8a8a);"></div>
<div class="a" style="left:51.00px;top:884.00px;width:1697.00px;height:4.00px;background:#333;"></div>
<div class="a" style="left:51.00px;top:888.00px;width:1697.00px;height:1.00px;background:#474747;"></div>
<div class="a" style="left:51.00px;top:889.00px;width:1697.00px;height:43.00px;background:#3f3f3f;"></div>
<div class="a" style="left:487.00px;top:86.50px;width:825.50px;height:786.50px;background:#1e1e1e;border-radius:7px 7px 2px 2px;"></div>
<div class="a" style="left:488.00px;top:87.50px;width:823.50px;height:784.50px;background:#2f2f2f;border-radius:6px 6px 0 0;border:1px solid #3a3a3a;border-bottom-color:#262626;"></div>
<div class="a" style="left:489.00px;top:88.50px;width:821.50px;height:32.00px;background:linear-gradient(#3b3b3b 0%,#343434 35%,#2c2c2c 100%);border-radius:6px 6px 0 0;"></div>
<div class="a t" style="left:496.00px;top:97.07px;font-size:13.5px;line-height:13.5px;color:#d4d4d4;font-weight:bold;transform:scaleX(1.1014);">Report Settings</div>
<svg class="a" style="left:1282px;top:92px;" width="23" height="23" viewBox="0 0 23 23"><defs><linearGradient id="cg" x1="0" y1="0" x2="0" y2="1"><stop offset="0" stop-color="#d6d6d6"/><stop offset="1" stop-color="#9c9c9c"/></linearGradient></defs><circle cx="11.5" cy="11.5" r="10.3" fill="url(#cg)" stroke="#242424" stroke-width="1.4"/><path d="M7 7 L16 16 M16 7 L7 16" stroke="#1a1a1a" stroke-width="1.8"/></svg>
<div class="a" style="left:494.50px;top:120.00px;width:810.50px;height:744.00px;background:#3d3d3d;border:1px solid #474747;border-right-color:#454545;border-bottom-color:#2e2e2e;"></div>
<div class="a" style="left:506.00px;top:186.00px;width:775.50px;height:561.50px;background:#3c3c3c;border:1px solid #2c2c2c;box-shadow:inset 1px 1px 0 #343434;"></div>
<div class="a" style="left:508.50px;top:134.00px;width:235.00px;height:25.60px;background:linear-gradient(#2a2a2a,#1f1f1f);border-radius:5px 5px 0 0;border-top:1px solid #333;"></div>
<div class="a" style="left:744.80px;top:134.00px;width:166.00px;height:25.60px;background:linear-gradient(#2a2a2a,#1f1f1f);border-radius:5px 5px 0 0;border-top:1px solid #333;"></div>
<div class="a" style="left:913.00px;top:134.00px;width:116.00px;height:25.60px;background:linear-gradient(#2a2a2a,#1f1f1f);border-radius:5px 5px 0 0;border-top:1px solid #333;"></div>
<div class="a" style="left:1030.80px;top:134.00px;width:129.80px;height:25.60px;background:linear-gradient(#2a2a2a,#1f1f1f);border-radius:5px 5px 0 0;border-top:1px solid #333;"></div>
<div class="a" style="left:1162.20px;top:134.00px;width:117.30px;height:25.60px;background:linear-gradient(#2a2a2a,#1f1f1f);border-radius:5px 5px 0 0;border-top:1px solid #333;"></div>
<div class="a" style="left:508.50px;top:160.70px;width:136.00px;height:24.90px;background:linear-gradient(#2a2a2a,#1f1f1f);border-radius:5px 5px 0 0;border-top:1px solid #333;"></div>
<div class="a" style="left:646.00px;top:160.70px;width:145.00px;height:24.90px;background:linear-gradient(#2a2a2a,#1f1f1f);border-radius:5px 5px 0 0;border-top:1px solid #333;"></div>
<div class="a" style="left:792.00px;top:160.70px;width:230.80px;height:24.90px;background:linear-gradient(#2a2a2a,#1f1f1f);border-radius:5px 5px 0 0;border-top:1px solid #333;"></div>
<div class="a" style="left:1119.50px;top:160.70px;width:160.00px;height:24.90px;background:linear-gradient(#2a2a2a,#1f1f1f);border-radius:5px 5px 0 0;border-top:1px solid #333;"></div>
<div class="a" style="left:1024.00px;top:158.00px;width:94.00px;height:29.10px;background:linear-gradient(#4c4c4c,#3c3c3c);border-radius:5px 5px 0 0;border-top:1px solid #555;"></div>
<div class="a t" style="left:526.80px;top:138.83px;font-size:15.8px;line-height:15.8px;color:#dcdcdc;transform:scaleX(1.0174);">Shift Rounding / Time Rules</div>
<div class="a t" style="left:763.00px;top:138.83px;font-size:15.8px;line-height:15.8px;color:#dcdcdc;transform:scaleX(0.9712);">Repeated Punches</div>
<div class="a t" style="left:930.70px;top:138.83px;font-size:15.8px;line-height:15.8px;color:#dcdcdc;transform:scaleX(0.9674);">Leave Early</div>
<div class="a t" style="left:1048.60px;top:138.83px;font-size:15.8px;line-height:15.8px;color:#dcdcdc;transform:scaleX(1.0112);">Reports View</div>
<div class="a t" style="left:1178.90px;top:138.83px;font-size:15.8px;line-height:15.8px;color:#dcdcdc;transform:scaleX(1.0082);">Arrive Early</div>
<div class="a t" style="left:533.40px;top:164.63px;font-size:15.8px;line-height:15.8px;color:#dcdcdc;transform:scaleX(1.0052);">Report Type</div>
<div class="a t" style="left:670.00px;top:164.63px;font-size:15.8px;line-height:15.8px;color:#dcdcdc;transform:scaleX(0.9891);">Report Period</div>
<div class="a t" style="left:816.60px;top:164.63px;font-size:15.8px;line-height:15.8px;color:#dcdcdc;transform:scaleX(1.0061);">After Midnight Calculating</div>
<div class="a t" style="left:1048.00px;top:163.03px;font-size:15.8px;line-height:15.8px;color:#c8c8c8;transform:scaleX(0.9519);">Breaks</div>
<div class="a t" style="left:1143.30px;top:164.63px;font-size:15.8px;line-height:15.8px;color:#dcdcdc;transform:scaleX(0.9810);">Late Deductions</div>
<div class="a t" style="left:529.20px;top:200.29px;font-size:20.8px;line-height:20.8px;color:#d8d8d8;transform:scaleX(0.9563);">Ignore break clock punches when calculating total hours worked</div>
<svg class="a" style="left:530.5px;top:239.5px;" width="17" height="17" viewBox="0 0 17 17"><rect x="0.6" y="0.6" width="16" height="16" rx="3.5" fill="#1f1f1f" stroke="#525252" stroke-width="1.2"/></svg>
<div class="a t" style="left:553.00px;top:240.72px;font-size:19px;line-height:19px;color:#d8d8d8;transform:scaleX(0.9645);">Include the Break time between Period 1 and 2</div>
<svg class="a" style="left:530.5px;top:268.1px;" width="17" height="17" viewBox="0 0 17 17"><rect x="0.6" y="0.6" width="16" height="16" rx="3.5" fill="#1f1f1f" stroke="#525252" stroke-width="1.2"/></svg>
<div class="a t" style="left:553.00px;top:269.32px;font-size:19px;line-height:19px;color:#d8d8d8;transform:scaleX(0.9645);">Include the Break time between Period 2 and 3</div>
<svg class="a" style="left:530.5px;top:296.7px;" width="17" height="17" viewBox="0 0 17 17"><rect x="0.6" y="0.6" width="16" height="16" rx="3.5" fill="#1f1f1f" stroke="#525252" stroke-width="1.2"/></svg>
<div class="a t" style="left:553.00px;top:297.92px;font-size:19px;line-height:19px;color:#d8d8d8;transform:scaleX(0.9645);">Include the Break time between Period 3 and 4</div>
<svg class="a" style="left:530.5px;top:325.3px;" width="17" height="17" viewBox="0 0 17 17"><rect x="0.6" y="0.6" width="16" height="16" rx="3.5" fill="#383838" stroke="#454545" stroke-width="1.2"/></svg>
<div class="a t" style="left:553.00px;top:326.52px;font-size:19px;line-height:19px;color:#8e8e8e;transform:scaleX(0.9645);">Include the Break time between Period 4 and 5</div>
<svg class="a" style="left:530.5px;top:353.90000000000003px;" width="17" height="17" viewBox="0 0 17 17"><rect x="0.6" y="0.6" width="16" height="16" rx="3.5" fill="#383838" stroke="#454545" stroke-width="1.2"/></svg>
<div class="a t" style="left:553.00px;top:355.12px;font-size:19px;line-height:19px;color:#8e8e8e;transform:scaleX(0.9645);">Include the Break time between Period 5 and 6</div>
<svg class="a" style="left:530.5px;top:382.5px;" width="17" height="17" viewBox="0 0 17 17"><rect x="0.6" y="0.6" width="16" height="16" rx="3.5" fill="#383838" stroke="#454545" stroke-width="1.2"/></svg>
<div class="a t" style="left:553.00px;top:383.72px;font-size:19px;line-height:19px;color:#8e8e8e;transform:scaleX(0.9645);">Include the Break time between Period 6 and 7</div>
<svg class="a" style="left:530.5px;top:411.1px;" width="17" height="17" viewBox="0 0 17 17"><rect x="0.6" y="0.6" width="16" height="16" rx="3.5" fill="#383838" stroke="#454545" stroke-width="1.2"/></svg>
<div class="a t" style="left:553.00px;top:412.32px;font-size:19px;line-height:19px;color:#8e8e8e;transform:scaleX(0.9645);">Include the Break time between Period 7 and 8</div>
<svg class="a" style="left:530.5px;top:466.2px;" width="17" height="17" viewBox="0 0 17 17"><rect x="0.6" y="0.6" width="16" height="16" rx="3.5" fill="#1f1f1f" stroke="#525252" stroke-width="1.2"/><path d="M4.5 8.8 L7.3 11.6 L12.5 5.5" fill="none" stroke="#cfcfcf" stroke-width="1.6"/></svg>
<div class="a t" style="left:553.00px;top:467.42px;font-size:19px;line-height:19px;color:#d8d8d8;transform:scaleX(0.9760);">Deduct Break Time from Report Hours Totals</div>
<svg class="a" style="left:530.5px;top:500.99999999999994px;" width="17" height="17" viewBox="0 0 17 17"><rect x="0.6" y="0.6" width="16" height="16" rx="3.5" fill="#1f1f1f" stroke="#525252" stroke-width="1.2"/></svg>
<div class="a t" style="left:553.00px;top:502.22px;font-size:19px;line-height:19px;color:#d8d8d8;transform:scaleX(0.9633);">Deduct Break Time from Regular Hours after Overtime is calculated</div>
<svg class="a" style="left:530.5px;top:535.8000000000001px;" width="17" height="17" viewBox="0 0 17 17"><rect x="0.6" y="0.6" width="16" height="16" rx="3.5" fill="#1f1f1f" stroke="#525252" stroke-width="1.2"/><path d="M4.5 8.8 L7.3 11.6 L12.5 5.5" fill="none" stroke="#cfcfcf" stroke-width="1.6"/></svg>
<div class="a t" style="left:553.00px;top:537.02px;font-size:19px;line-height:19px;color:#d8d8d8;transform:scaleX(0.9613);">Deduct Compulsory Break Time from Expected Shift Hours</div>
<svg class="a" style="left:530.5px;top:569.6px;" width="17" height="17" viewBox="0 0 17 17"><rect x="0.6" y="0.6" width="16" height="16" rx="3.5" fill="#1f1f1f" stroke="#525252" stroke-width="1.2"/></svg>
<div class="a t" style="left:553.00px;top:570.82px;font-size:19px;line-height:19px;color:#d8d8d8;transform:scaleX(0.9352);">Calculate Hours from First Clock Punch and Last Clock Punch Only</div>
<svg class="a" style="left:530.9px;top:619px;" width="17" height="17" viewBox="0 0 17 17"><rect x="0.6" y="0.6" width="16" height="16" rx="3.5" fill="#1f1f1f" stroke="#525252" stroke-width="1.2"/></svg>
<div class="a t" style="left:553.10px;top:619.92px;font-size:19px;line-height:19px;color:#d8d8d8;transform:scaleX(0.9222);">Set</div>
<div class="a" style="left:600.30px;top:615.40px;width:66.50px;height:30.10px;background:#1f1f1f;border:1px solid #575757;border-radius:2px;box-shadow:inset 1px 1px 0 #2a2a2a;"></div>
<div class="a t" style="left:602.30px;top:619.29px;font-size:19.5px;line-height:19.5px;color:#e2e2e2;transform:scaleX(0.9529);">00:15</div>
<div class="a t" style="left:683.50px;top:618.22px;font-size:19px;line-height:19px;color:#d8d8d8;transform:scaleX(0.9532);">break if worked</div>
<div class="a" style="left:843.20px;top:613.90px;width:62.60px;height:32.70px;background:#1f1f1f;border:1px solid #575757;border-radius:2px;box-shadow:inset 1px 1px 0 #2a2a2a;"></div>
<svg class="a" style="left:884.8px;top:613.9px;" width="20" height="32.700000000000045" viewBox="0 0 20 32.700000000000045"><rect x="1" y="2.0" width="17.5" height="13.9" rx="4" fill="#8a8a8a" stroke="#6a6a6a" stroke-width="0.8"/><path d="M5 11.9 L9.75 5.9 L14.5 11.9 Z" fill="#0e0e0e"/><rect x="1" y="16.9" width="17.5" height="13.9" rx="4" fill="#8a8a8a" stroke="#6a6a6a" stroke-width="0.8"/><path d="M5 20.8 L9.75 26.8 L14.5 20.8 Z" fill="#0e0e0e"/></svg>
<div class="a" style="left:884.30px;top:614.90px;width:1.00px;height:30.70px;background:#2a2a2a;"></div>
<div class="a t" style="left:846.20px;top:618.29px;font-size:19.5px;line-height:19.5px;color:#e2e2e2;">4</div>
<div class="a t" style="left:934.40px;top:618.22px;font-size:19px;line-height:19px;color:#d8d8d8;transform:scaleX(0.9755);">hours or over</div>
<svg class="a" style="left:530.9px;top:663px;" width="17" height="17" viewBox="0 0 17 17"><rect x="0.6" y="0.6" width="16" height="16" rx="3.5" fill="#1f1f1f" stroke="#525252" stroke-width="1.2"/></svg>
<div class="a t" style="left:553.10px;top:663.92px;font-size:19px;line-height:19px;color:#d8d8d8;transform:scaleX(0.9222);">Set</div>
<div class="a" style="left:600.30px;top:656.90px;width:66.50px;height:29.20px;background:#1f1f1f;border:1px solid #575757;border-radius:2px;box-shadow:inset 1px 1px 0 #2a2a2a;"></div>
<div class="a t" style="left:602.30px;top:662.79px;font-size:19.5px;line-height:19.5px;color:#e2e2e2;transform:scaleX(0.9529);">00:30</div>
<div class="a t" style="left:683.50px;top:661.72px;font-size:19px;line-height:19px;color:#d8d8d8;transform:scaleX(0.9532);">break if worked</div>
<div class="a" style="left:846.00px;top:656.40px;width:59.80px;height:32.60px;background:#1f1f1f;border:1px solid #575757;border-radius:2px;box-shadow:inset 1px 1px 0 #2a2a2a;"></div>
<svg class="a" style="left:884.8px;top:656.4px;" width="20" height="32.60000000000002" viewBox="0 0 20 32.60000000000002"><rect x="1" y="2.0" width="17.5" height="13.8" rx="4" fill="#8a8a8a" stroke="#6a6a6a" stroke-width="0.8"/><path d="M5 11.9 L9.75 5.9 L14.5 11.9 Z" fill="#0e0e0e"/><rect x="1" y="16.8" width="17.5" height="13.8" rx="4" fill="#8a8a8a" stroke="#6a6a6a" stroke-width="0.8"/><path d="M5 20.7 L9.75 26.7 L14.5 20.7 Z" fill="#0e0e0e"/></svg>
<div class="a" style="left:884.30px;top:657.40px;width:1.00px;height:30.60px;background:#2a2a2a;"></div>
<div class="a t" style="left:849.00px;top:661.79px;font-size:19.5px;line-height:19.5px;color:#e2e2e2;">6</div>
<div class="a t" style="left:934.40px;top:661.72px;font-size:19px;line-height:19px;color:#d8d8d8;transform:scaleX(0.9755);">hours or over</div>
<svg class="a" style="left:530.9px;top:706.7px;" width="17" height="17" viewBox="0 0 17 17"><rect x="0.6" y="0.6" width="16" height="16" rx="3.5" fill="#1f1f1f" stroke="#525252" stroke-width="1.2"/></svg>
<div class="a t" style="left:553.10px;top:707.62px;font-size:19px;line-height:19px;color:#d8d8d8;transform:scaleX(0.9222);">Set</div>
<div class="a" style="left:600.30px;top:700.30px;width:66.50px;height:29.30px;background:#1f1f1f;border:1px solid #575757;border-radius:2px;box-shadow:inset 1px 1px 0 #2a2a2a;"></div>
<div class="a t" style="left:602.30px;top:705.69px;font-size:19.5px;line-height:19.5px;color:#e2e2e2;transform:scaleX(0.9529);">01:00</div>
<div class="a t" style="left:683.50px;top:704.62px;font-size:19px;line-height:19px;color:#d8d8d8;transform:scaleX(0.9532);">break if worked</div>
<div class="a" style="left:846.00px;top:698.80px;width:59.80px;height:32.70px;background:#1f1f1f;border:1px solid #575757;border-radius:2px;box-shadow:inset 1px 1px 0 #2a2a2a;"></div>
<svg class="a" style="left:884.8px;top:698.8px;" width="20" height="32.700000000000045" viewBox="0 0 20 32.700000000000045"><rect x="1" y="2.0" width="17.5" height="13.9" rx="4" fill="#8a8a8a" stroke="#6a6a6a" stroke-width="0.8"/><path d="M5 11.9 L9.75 5.9 L14.5 11.9 Z" fill="#0e0e0e"/><rect x="1" y="16.9" width="17.5" height="13.9" rx="4" fill="#8a8a8a" stroke="#6a6a6a" stroke-width="0.8"/><path d="M5 20.8 L9.75 26.8 L14.5 20.8 Z" fill="#0e0e0e"/></svg>
<div class="a" style="left:884.30px;top:699.80px;width:1.00px;height:30.70px;background:#2a2a2a;"></div>
<div class="a t" style="left:849.00px;top:704.69px;font-size:19.5px;line-height:19.5px;color:#e2e2e2;">8</div>
<div class="a t" style="left:934.40px;top:704.62px;font-size:19px;line-height:19px;color:#d8d8d8;transform:scaleX(0.9755);">hours or over</div>
<div class="a" style="left:984.50px;top:230.00px;width:264.50px;height:113.30px;border:1px solid #565656;box-shadow:inset 1px 1px 0 #333, 1px 1px 0 #333;"></div>
<div class="a t" style="left:997.20px;top:244.06px;font-size:16px;line-height:16px;color:#d6d6d6;font-weight:bold;transform:scaleX(1.0620);">Standard Report Only</div>
<svg class="a" style="left:999px;top:276.3px;" width="17" height="17" viewBox="0 0 17 17"><rect x="0.6" y="0.6" width="16" height="16" rx="3.5" fill="#1f1f1f" stroke="#525252" stroke-width="1.2"/></svg>
<div class="a t" style="left:1021.00px;top:276.56px;font-size:16px;line-height:16px;color:#d8d8d8;transform:scaleX(0.9906);">Deduct over break</div>
<div class="a t" style="left:1017.00px;top:298.06px;font-size:16px;line-height:16px;color:#d8d8d8;">when exceeding...</div>
<div class="a" style="left:1169.00px;top:299.00px;width:62.00px;height:30.00px;background:#1f1f1f;border:1px solid #575757;border-radius:2px;box-shadow:inset 1px 1px 0 #2a2a2a;"></div>
<div class="a t" style="left:1171.70px;top:302.99px;font-size:19.5px;line-height:19.5px;color:#e2e2e2;transform:scaleX(0.9427);">00:30</div>
<div class="a" style="left:984.50px;top:374.20px;width:264.50px;height:101.20px;border:1px solid #565656;box-shadow:inset 1px 1px 0 #333, 1px 1px 0 #333;"></div>
<div class="a t" style="left:994.90px;top:386.46px;font-size:16px;line-height:16px;color:#d6d6d6;font-weight:bold;transform:scaleX(1.0048);">Compulsory Shift Pattern Break</div>
<div class="a" style="left:998.80px;top:423.50px;width:62.00px;height:33.30px;background:#1f1f1f;border:1px solid #575757;border-radius:2px;box-shadow:inset 1px 1px 0 #2a2a2a;"></div>
<svg class="a" style="left:1039.8px;top:423.5px;" width="20" height="33.30000000000001" viewBox="0 0 20 33.30000000000001"><rect x="1" y="2.0" width="17.5" height="14.2" rx="4" fill="#8a8a8a" stroke="#6a6a6a" stroke-width="0.8"/><path d="M5 12.1 L9.75 6.1 L14.5 12.1 Z" fill="#0e0e0e"/><rect x="1" y="17.2" width="17.5" height="14.2" rx="4" fill="#8a8a8a" stroke="#6a6a6a" stroke-width="0.8"/><path d="M5 21.2 L9.75 27.2 L14.5 21.2 Z" fill="#0e0e0e"/></svg>
<div class="a" style="left:1039.30px;top:424.50px;width:1.00px;height:31.30px;background:#2a2a2a;"></div>
<div class="a t" style="left:1001.50px;top:427.47px;font-size:20px;line-height:20px;color:#e2e2e2;">0</div>
<div class="a t" style="left:1070.00px;top:419.76px;font-size:16px;line-height:16px;color:#d8d8d8;">Hours must work</div>
<div class="a t" style="left:1070.00px;top:441.96px;font-size:16px;line-height:16px;color:#d8d8d8;">before break deducted</div>
<div class="a" style="left:506.70px;top:757.30px;width:168.30px;height:82.70px;background:linear-gradient(170deg,#7d7d7d,#6e6e6e 60%,#686868);border-radius:5px;border:1px solid #353535;"></div>
<div class="a" style="left:684.70px;top:757.30px;width:178.50px;height:82.70px;background:linear-gradient(170deg,#7d7d7d,#6e6e6e 60%,#686868);border-radius:5px;border:1px solid #353535;"></div>
<div class="a" style="left:873.20px;top:757.30px;width:179.00px;height:82.70px;background:linear-gradient(170deg,#7d7d7d,#6e6e6e 60%,#686868);border-radius:5px;border:1px solid #353535;"></div>
<div class="a" style="left:1078.30px;top:757.30px;width:202.30px;height:82.70px;background:linear-gradient(170deg,#7d7d7d,#6e6e6e 60%,#686868);border-radius:5px;border:1px solid #353535;"></div>
<div class="a t" style="left:529.60px;top:814.23px;font-size:16.5px;line-height:16.5px;color:#141414;transform:scaleX(0.9611);">Report Start Date</div>
<div class="a t" style="left:716.40px;top:814.13px;font-size:16.5px;line-height:16.5px;color:#141414;transform:scaleX(0.9406);">Calculate Report</div>
<div class="a t" style="left:898.60px;top:814.13px;font-size:16.5px;line-height:16.5px;color:#141414;transform:scaleX(0.9436);">Calculate Forecast</div>
<div class="a t" style="left:1132.20px;top:814.13px;font-size:16.5px;line-height:16.5px;color:#141414;transform:scaleX(0.9508);">Save Settings</div>
<svg class="a" style="left:577px;top:772px;" width="29" height="31" viewBox="0 0 29 31"><g transform="scale(1.000,0.969)"><rect x="1" y="4" width="27" height="27.5" fill="#f8f8f8"/><rect x="3.2" y="11.2" width="22.6" height="17.3" fill="#6e6e6e" stroke="#5e5e5e" stroke-width="0.8"/><rect x="5.2" y="0.3" width="3.6" height="8.6" rx="1.8" fill="#f8f8f8" stroke="#5a5a5a" stroke-width="0.9"/><rect x="20.2" y="0.3" width="3.6" height="8.6" rx="1.8" fill="#f8f8f8" stroke="#5a5a5a" stroke-width="0.9"/><text x="14.5" y="26.2" font-size="14.2" font-family="Liberation Sans" font-weight="bold" text-anchor="middle" fill="#fafafa">27</text></g></svg>
<svg class="a" style="left:758.8px;top:771.4px;" width="32" height="32" viewBox="0 0 32 32"><circle cx="16" cy="16" r="15.6" fill="#fcfcfc"/><circle cx="16" cy="16" r="12.9" fill="#fcfcfc" stroke="#8c8c8c" stroke-width="0.9"/><line x1="25.20" y1="16.00" x2="26.60" y2="16.00" stroke="#8a8a8a" stroke-width="1.3"/><line x1="23.97" y1="20.60" x2="25.18" y2="21.30" stroke="#8a8a8a" stroke-width="1.3"/><line x1="20.60" y1="23.97" x2="21.30" y2="25.18" stroke="#8a8a8a" stroke-width="1.3"/><line x1="16.00" y1="25.20" x2="16.00" y2="26.60" stroke="#8a8a8a" stroke-width="1.3"/><line x1="11.40" y1="23.97" x2="10.70" y2="25.18" stroke="#8a8a8a" stroke-width="1.3"/><line x1="8.03" y1="20.60" x2="6.82" y2="21.30" stroke="#8a8a8a" stroke-width="1.3"/><line x1="6.80" y1="16.00" x2="5.40" y2="16.00" stroke="#8a8a8a" stroke-width="1.3"/><line x1="8.03" y1="11.40" x2="6.82" y2="10.70" stroke="#8a8a8a" stroke-width="1.3"/><line x1="11.40" y1="8.03" x2="10.70" y2="6.82" stroke="#8a8a8a" stroke-width="1.3"/><line x1="16.00" y1="6.80" x2="16.00" y2="5.40" stroke="#8a8a8a" stroke-width="1.3"/><line x1="20.60" y1="8.03" x2="21.30" y2="6.82" stroke="#8a8a8a" stroke-width="1.3"/><line x1="23.97" y1="11.40" x2="25.18" y2="10.70" stroke="#8a8a8a" stroke-width="1.3"/><path d="M15.6 6 V15.8 L24.5 20.8" fill="none" stroke="#6a6a6a" stroke-width="1.7"/></svg>
<svg class="a" style="left:947px;top:768px;" width="32" height="38" viewBox="0 0 32 38"><rect x="12.6" y="3" width="5.4" height="4.6" rx="1.8" fill="none" stroke="#f4f4f4" stroke-width="1.7"/><rect x="14.3" y="7" width="2" height="3.5" fill="#f4f4f4"/><path d="M24.5 11.5 L28 8" stroke="#f4f4f4" stroke-width="2.2" stroke-linecap="round"/><circle cx="15.2" cy="22" r="12.4" fill="none" stroke="#f4f4f4" stroke-width="2.4"/><path d="M15.2 22 V11.5 A10.5 10.5 0 0 1 25.4 22 Z" fill="#d0d0d0"/><path d="M15.2 22 V11.5 L21 16 Z" fill="#ececec"/></svg>
<svg class="a" style="left:1166px;top:772.8px;" width="30" height="30" viewBox="0 0 30 30"><path d="M0 0 H25 L29.3 4.3 V29.3 H0 Z" fill="#f4f4f8"/><rect x="8.3" y="1.7" width="13" height="8.5" fill="#6a6a6a"/><rect x="16" y="2.2" width="2.8" height="6" fill="#e8e8e8"/><rect x="6" y="15.7" width="18" height="11.5" fill="#6a6a6a"/><path d="M9 19 H21 M9 21.5 H21 M9 24 H21" stroke="#d8d8d8" stroke-width="1.1"/></svg>
<div class="a" style="left:83.50px;top:892.00px;width:129.50px;height:38.00px;background:#b8d444;border-radius:0 19px 19px 0;border:1px solid #2a3010;border-left:none;"></div>
<svg class="a" style="left:59px;top:892.5px;" width="38" height="38" viewBox="0 0 38 38"><defs><radialGradient id="lg" cx="45%" cy="40%" r="65%"><stop offset="0" stop-color="#ffffff"/><stop offset="0.6" stop-color="#d6dcfa"/><stop offset="1" stop-color="#9aa4e6"/></radialGradient></defs><circle cx="19" cy="19" r="17.5" fill="url(#lg)" stroke="#2a2a2a" stroke-width="1.5"/><path d="M19 3 v2 M19 33 v2 M3 19 h2 M33 19 h2" stroke="#444" stroke-width="1.2"/><path d="M11 16 L30 9 L19 20 L22 29 Z" fill="#1e2810"/><path d="M20 18 L29 10" stroke="#8ab020" stroke-width="1.5"/></svg>
<div class="a" style="left:102.5px;top:895px;width:120px;height:30px;font-family:'Liberation Serif',serif;font-weight:bold;color:#111;white-space:nowrap;line-height:30px;transform:skewX(-6deg) scaleX(0.925);transform-origin:0 0;"><span style="font-size:25px">C</span><span style="font-size:18px">lock</span><span style="font-size:25px">R</span><span style="font-size:18px">eports</span></div>
<div class="a t" style="left:772.00px;top:902.88px;font-size:15.5px;line-height:15.5px;color:#cdcdcd;transform:scaleX(1.0559);">Copyright © www.clockreports.com</div>
<svg class="a" style="left:1500px;top:890px;" width="36" height="38" viewBox="0 0 36 38"><circle cx="14" cy="15" r="10" fill="none" stroke="#f2f2f2" stroke-width="3.2"/><rect x="8.5" y="13.5" width="11" height="3" fill="#f2f2f2"/><path d="M21 22 L31 32" stroke="#e0e0e0" stroke-width="4.5" stroke-linecap="round"/></svg>
<svg class="a" style="left:1698px;top:890px;" width="36" height="38" viewBox="0 0 36 38"><circle cx="14" cy="15" r="10" fill="none" stroke="#f2f2f2" stroke-width="3.2"/><rect x="8.5" y="13.5" width="11" height="3" fill="#f2f2f2"/><rect x="12.5" y="9.5" width="3" height="11" fill="#f2f2f2"/><path d="M21 22 L31 32" stroke="#e0e0e0" stroke-width="4.5" stroke-linecap="round"/></svg>
<div class="a" style="left:1549.00px;top:901.00px;width:141.00px;height:4.50px;background:#1a1a1a;border-radius:2px;border:1px solid #2a2a2a;"></div>
<svg class="a" style="left:1591px;top:893.5px;" width="13" height="22" viewBox="0 0 13 22"><path d="M1 1 H12 V15 L6.5 21 L1 15 Z" fill="#4a4a4a" stroke="#2a2a2a" stroke-width="1"/></svg>
<svg class="a" style="left:1553px;top:916px;" width="135" height="6" viewBox="0 0 135 6"><rect x="0.0" y="0" width="1.2" height="5" fill="#d0d0d0"/><rect x="8.9" y="1" width="1.2" height="3.5" fill="#d0d0d0"/><rect x="17.7" y="1" width="1.2" height="3.5" fill="#d0d0d0"/><rect x="26.6" y="1" width="1.2" height="3.5" fill="#d0d0d0"/><rect x="35.5" y="1" width="1.2" height="3.5" fill="#d0d0d0"/><rect x="44.3" y="1" width="1.2" height="3.5" fill="#d0d0d0"/><rect x="53.2" y="1" width="1.2" height="3.5" fill="#d0d0d0"/><rect x="62.1" y="1" width="1.2" height="3.5" fill="#d0d0d0"/><rect x="70.9" y="1" width="1.2" height="3.5" fill="#d0d0d0"/><rect x="79.8" y="1" width="1.2" height="3.5" fill="#d0d0d0"/><rect x="88.7" y="1" width="1.2" height="3.5" fill="#d0d0d0"/><rect x="97.5" y="1" width="1.2" height="3.5" fill="#d0d0d0"/><rect x="106.4" y="1" width="1.2" height="3.5" fill="#d0d0d0"/><rect x="115.3" y="1" width="1.2" height="3.5" fill="#d0d0d0"/><rect x="124.1" y="1" width="1.2" height="3.5" fill="#d0d0d0"/><rect x="133.0" y="0" width="1.2" height="5" fill="#d0d0d0"/></svg>
<div class="a" style="left:51.00px;top:932.00px;width:1697.00px;height:50.00px;background:#0f1e25;"></div>
<div class="a" style="left:1742.00px;top:932.00px;width:1.00px;height:50.00px;background:#5a6a70;"></div>
<svg class="a" style="left:70px;top:946.5px;" width="21" height="21" viewBox="0 0 21 21"><path d="M0 3 L9 1.8 V10 H0 Z M10 1.6 L21 0 V10 H10 Z M0 11 H9 V19.2 L0 18 Z M10 11 H21 V21 L10 19.4 Z" fill="#f4f4f4"/></svg>
<svg class="a" style="left:129px;top:946px;" width="22" height="22" viewBox="0 0 22 22"><rect x="2" y="6" width="14" height="10" fill="none" stroke="#eee" stroke-width="1.8"/><path d="M1 2 H17 M1 20 H17" stroke="#eee" stroke-width="1.8"/><rect x="19" y="2" width="2" height="3" fill="#eee"/><rect x="19" y="7" width="2" height="13" fill="#eee"/></svg>
<svg class="a" style="left:189px;top:943px;" width="31" height="30" viewBox="0 0 31 30"><path d="M2 1 L24 4 V20 L2 19 Z" fill="#dfe6f0" stroke="#9aa" stroke-width="0.8"/><path d="M4 3.5 L22 6 V18 L4 17 Z" fill="#1a3ad0"/><path d="M4 3.5 L14 5 L4 12 Z" fill="#4a7af0" opacity="0.7"/><ellipse cx="12" cy="25" rx="7" ry="3" fill="#ccc"/><circle cx="23" cy="23" r="6.5" fill="#e8e8e8" stroke="#999" stroke-width="0.8"/><path d="M20 21 l2 2 -2 2 M26 21 l-2 2 2 2" stroke="#2a9a2a" stroke-width="1.3" fill="none"/></svg>
<svg class="a" style="left:250px;top:946px;" width="28" height="23" viewBox="0 0 28 23"><path d="M0 2 H9 L11 4 H27 V22 H0 Z" fill="#f5d77a"/><rect x="0" y="6" width="27" height="16" fill="#f9e4a0"/><rect x="2" y="0.5" width="7" height="2.5" fill="#8fd0ee"/><path d="M8 22 V14 H19 V22 H16 V17 H11 V22 Z" fill="#2a8fe0"/></svg>
<svg class="a" style="left:311.6px;top:943px;" width="28" height="28" viewBox="0 0 28 28"><circle cx="14" cy="14" r="14" fill="#db4437"/><path d="M14 14 L26.12 7.00 A14 14 0 0 1 14.00 28.00 Z" fill="#f4c20d"/><path d="M14 14 L14.00 28.00 A14 14 0 0 1 1.88 7.00 Z" fill="#0f9d58"/><circle cx="14" cy="14" r="6.44" fill="#fff"/><circle cx="14" cy="14" r="5.04" fill="#4285f4"/></svg>
<svg class="a" style="left:371px;top:941px;" width="30" height="31" viewBox="0 0 30 31"><defs><linearGradient id="shg" x1="0" y1="0" x2="0" y2="1"><stop offset="0" stop-color="#3a8ad8"/><stop offset="1" stop-color="#0e4a98"/></linearGradient></defs><path d="M2 4 Q15 -1 28 4 V15 Q28 25 15 30 Q2 25 2 15 Z" fill="url(#shg)" stroke="#b8c8d8" stroke-width="1.3"/><path d="M5 14 L8 8 L11 14 M12 8 V14 M14 14 L16 8 L18.5 12 L21 8 L23 14" fill="none" stroke="#f4f8ff" stroke-width="1.8"/><path d="M3 17 H27 L25.5 21 H4.5 Z" fill="#3aa04a"/></svg>
<div class="a" style="left:422.50px;top:979.00px;width:189.00px;height:3.00px;background:#8fc7ea;"></div>
<svg class="a" style="left:430px;top:942.5px;" width="30" height="29" viewBox="0 0 30 29"><rect x="0" y="0" width="30" height="29" rx="2" fill="#1170d0"/><circle cx="15" cy="14.5" r="11" fill="#fff"/><path d="M5.5 14.5 L10 10.5 V13 H20 V10.5 L24.5 14.5 L20 18.5 V16 H10 V18.5 Z" fill="#1170d0"/></svg>
<div class="a t" style="left:466.00px;top:948.68px;font-size:15.5px;line-height:15.5px;color:#f2f2f2;transform:scaleX(0.9176);">TeamViewer</div>
<svg class="a" style="left:634px;top:943px;" width="27" height="27" viewBox="0 0 27 27"><circle cx="13.5" cy="13.5" r="13" fill="#4caa3c"/><circle cx="13.5" cy="13.5" r="8" fill="none" stroke="#fff" stroke-width="2.2"/><path d="M13.5 9 V14 H17" fill="none" stroke="#fff" stroke-width="1.8"/><path d="M5 20 L8 17" stroke="#4caa3c" stroke-width="4"/></svg>
<svg class="a" style="left:694px;top:942px;" width="28" height="29" viewBox="0 0 28 29"><circle cx="9" cy="9" r="8" fill="#17a9f0"/><circle cx="19" cy="20" r="8" fill="#17a9f0"/><circle cx="14" cy="14.5" r="11.5" fill="#17a9f0"/><text x="14" y="21.5" font-family="Liberation Sans" font-weight="bold" font-size="19" text-anchor="middle" fill="#fff">S</text></svg>
<div class="a" style="left:739.40px;top:932.00px;width:198.50px;height:50.00px;background:#334149;"></div>
<div class="a" style="left:739.40px;top:979.00px;width:198.50px;height:3.00px;background:#8fc7ea;"></div>
<svg class="a" style="left:753px;top:943.5px;" width="27" height="27" viewBox="0 0 27 27"><defs><radialGradient id="tg" cx="45%" cy="40%" r="65%"><stop offset="0" stop-color="#f4f6ff"/><stop offset="1" stop-color="#8a96e6"/></radialGradient></defs><circle cx="13.5" cy="13.5" r="12.5" fill="url(#tg)" stroke="#3a3a90" stroke-width="1.2"/><path d="M7 12 L21 7 L13 15 L15 21 Z" fill="#1e2810"/></svg>
<div class="a t" style="left:786.20px;top:948.68px;font-size:15.5px;line-height:15.5px;color:#f2f2f2;transform:scaleX(0.9141);">ClockReportsXE Ult...</div>
<svg class="a" style="left:952.5px;top:942.5px;" width="28" height="28" viewBox="0 0 28 28"><circle cx="14" cy="14" r="14" fill="#db4437"/><path d="M14 14 L26.12 7.00 A14 14 0 0 1 14.00 28.00 Z" fill="#f4c20d"/><path d="M14 14 L14.00 28.00 A14 14 0 0 1 1.88 7.00 Z" fill="#0f9d58"/><circle cx="14" cy="14" r="6.44" fill="#fff"/><circle cx="14" cy="14" r="5.04" fill="#4285f4"/></svg>
<div class="a" style="left:944.20px;top:979.00px;width:189.00px;height:3.00px;background:#8fc7ea;"></div>
<div class="a t" style="left:986.40px;top:948.68px;font-size:15.5px;line-height:15.5px;color:#f2f2f2;transform:scaleX(0.9326);">Facebook - Google ...</div>
<svg class="a" style="left:1435px;top:946px;" width="22" height="22" viewBox="0 0 22 22"><circle cx="15" cy="5" r="3.5" fill="none" stroke="#eee" stroke-width="1.4"/><path d="M9.5 14 Q10 9 15 9 Q20 9 21 14" fill="none" stroke="#eee" stroke-width="1.4"/><circle cx="8" cy="11" r="3.5" fill="none" stroke="#eee" stroke-width="1.4"/><path d="M1.5 21 Q2 15 8 15 Q14 15 14.5 21" fill="none" stroke="#eee" stroke-width="1.4"/></svg>
<svg class="a" style="left:1482px;top:950px;" width="18" height="12" viewBox="0 0 18 12"><path d="M1.5 10 L9 2.5 L16.5 10" fill="none" stroke="#eee" stroke-width="1.6"/></svg>
<svg class="a" style="left:1509px;top:946px;" width="22" height="22" viewBox="0 0 22 22"><rect x="6" y="2" width="15" height="11" fill="none" stroke="#eee" stroke-width="1.4"/><path d="M13.5 13 V17 M9 18 H18" stroke="#eee" stroke-width="1.4"/><rect x="1" y="2" width="5" height="6" fill="none" stroke="#eee" stroke-width="1.2"/><path d="M3.5 8 V20" stroke="#eee" stroke-width="1.2"/></svg>
<svg class="a" style="left:1539px;top:947px;" width="22" height="20" viewBox="0 0 22 20"><rect x="6" y="6" width="14" height="10" fill="none" stroke="#eee" stroke-width="1.5"/><rect x="8" y="8" width="9" height="6" fill="#eee"/><rect x="20" y="9" width="1.5" height="4" fill="#eee"/><path d="M2 4 V8 Q2 10 4 10 H6 M3 2 v3 M5 2 v3" stroke="#eee" stroke-width="1.2" fill="none"/></svg>
<svg class="a" style="left:1569px;top:946px;" width="23" height="22" viewBox="0 0 23 22"><path d="M2 8 H6 L11 3 V19 L6 14 H2 Z" fill="none" stroke="#eee" stroke-width="1.4"/><path d="M14 7.5 Q16 11 14 14.5 M17 5 Q20.5 11 17 17 M20 3 Q24.5 11 20 19" fill="none" stroke="#eee" stroke-width="1.4"/></svg>
<div class="a t" style="left:1621.20px;top:938.73px;font-size:14.5px;line-height:14.5px;color:#f0f0f0;transform:scaleX(0.9260);">09:13</div>
<div class="a t" style="left:1602.25px;top:960.63px;font-size:14.5px;line-height:14.5px;color:#f0f0f0;">21/12/2018</div>
<svg class="a" style="left:1696px;top:947px;" width="22" height="21" viewBox="0 0 22 21"><path d="M1 1 H21 V15 H13 L10.5 19 L8 15 H1 Z" fill="none" stroke="#eee" stroke-width="1.5"/></svg>
<div class="a t" style="left:888.00px;top:874.11px;font-size:10.5px;line-height:10.5px;color:#7a5aa8;font-weight:bold;transform:scaleX(0.9610);">0.9%</div>
</body></html>
